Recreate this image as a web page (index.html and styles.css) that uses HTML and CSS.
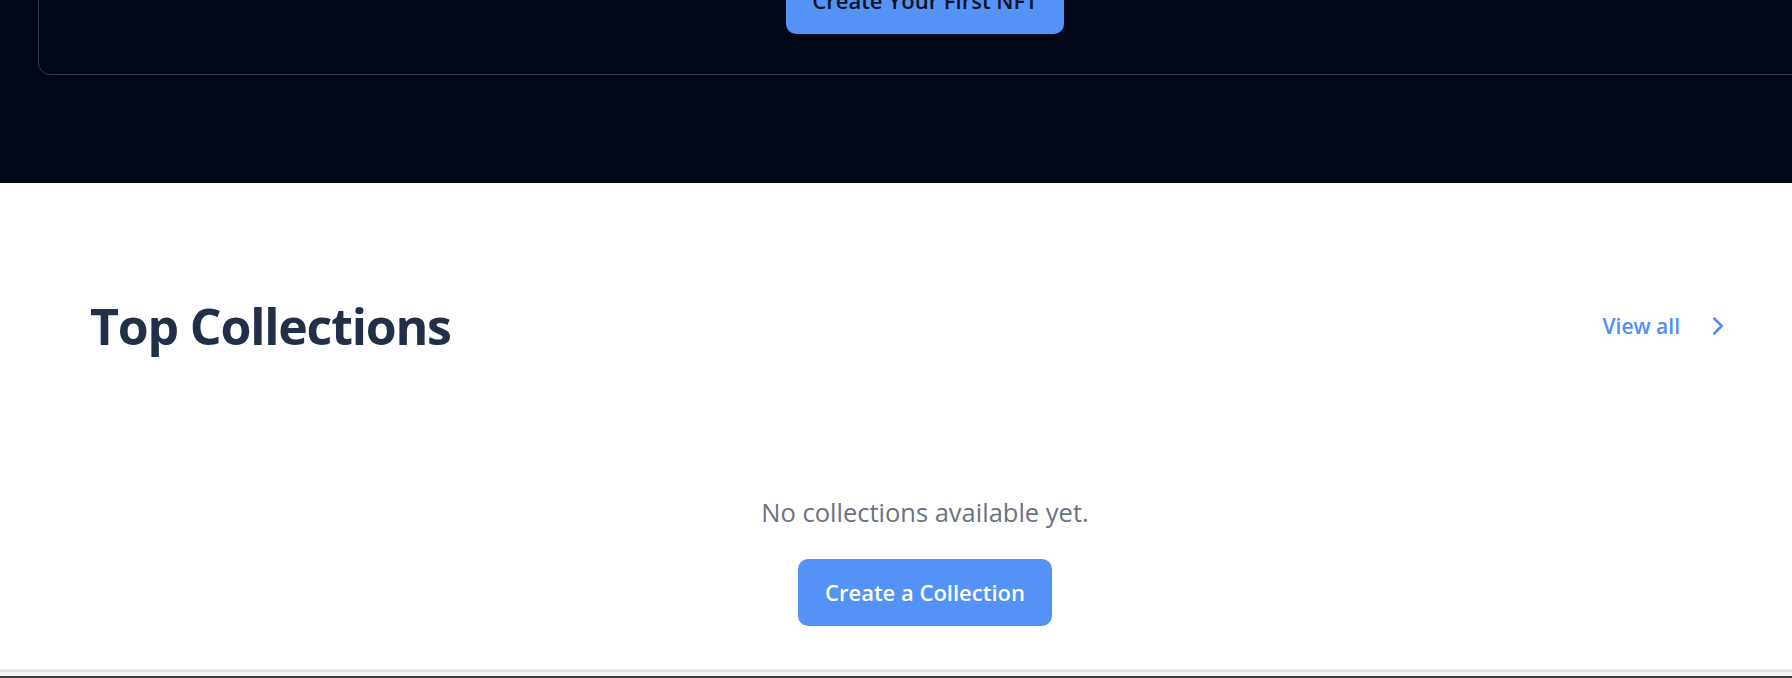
FILE: index.html
```html
<!DOCTYPE html>
<html lang="en">
<head>
<meta charset="utf-8">
<title>Top Collections</title>
<link rel="stylesheet" href="styles.css">
</head>
<body>
  <section class="hero">
    <div class="card">
      <button class="btn btn-dark-text">Create Your First NFT</button>
    </div>
  </section>
  <section class="collections">
    <div class="collections-head">
      <h2 class="title">Top Collections</h2>
      <a class="view-all" href="#">View all
        <svg class="chev" viewBox="0 0 24 24" fill="none" stroke="currentColor" stroke-width="2" stroke-linecap="round" stroke-linejoin="round"><path d="m9 18 6-6-6-6"/></svg>
      </a>
    </div>
    <div class="empty">
      <p class="empty-text">No collections available yet.</p>
      <button class="btn btn-light-text">Create a Collection</button>
    </div>
  </section>
  <div class="bottom-strip">
    <div class="s1"></div>
    <div class="s2"></div>
    <div class="s3"></div>
    <div class="s4"></div>
  </div>
</body>
</html>
```
FILE: styles.css
```css
html, body {
  margin: 0;
  padding: 0;
  background: #ffffff;
  overflow: hidden;
}
body {
  font-family: "Open Sans", "Noto Sans", sans-serif;
  width: 1792px;
}
.hero {
  background: #020817;
  height: 183px;
  overflow: hidden;
  padding-left: 38px;
  box-sizing: border-box;
}
.card {
  margin-top: -134px;
  width: 1774px;
  box-sizing: border-box;
  border: 1px solid #313a4d;
  border-radius: 12px;
  padding: 100px 0 40px;
  display: flex;
  justify-content: center;
}
.btn {
  font-family: inherit;
  font-weight: 600;
  font-size: 22px;
  line-height: 32px;
  border: none;
  border-radius: 10px;
  background: #5592f6;
  padding: 17px 25px 18px;
  cursor: pointer;
}
.btn-dark-text {
  color: #0b1221;
  width: 278px;
}
.btn-light-text {
  color: #ffffff;
  width: 254px;
}
.collections {
  padding: 113px 32px 43px 90px;
}
.collections-head {
  display: flex;
  align-items: center;
  justify-content: space-between;
  padding-right: 27px;
}
.title {
  margin: 0;
  font-size: 50px;
  line-height: 60px;
  font-weight: 700;
  color: #212f47;
  letter-spacing: -1.2px;
}
.view-all {
  display: flex;
  align-items: center;
  gap: 23px;
  color: #4f8ef7;
  text-decoration: none;
  font-size: 21px;
  font-weight: 600;
  line-height: 30px;
}
.chev {
  width: 30px;
  height: 30px;
  display: block;
}
.empty {
  margin-top: 138px;
  display: flex;
  flex-direction: column;
  align-items: center;
}
.empty-text {
  margin: 0 0 29px;
  font-size: 25.5px;
  line-height: 36px;
  color: #6b7280;
}
.bottom-strip .s1 { height: 1px; background: #eeeeee; }
.bottom-strip .s2 { height: 2px; background: #e2e2e2; }
.bottom-strip .s3 { height: 4px; background: #f4f4f4; }
.bottom-strip .s4 { height: 2px; background: #3b3b33; }
```
